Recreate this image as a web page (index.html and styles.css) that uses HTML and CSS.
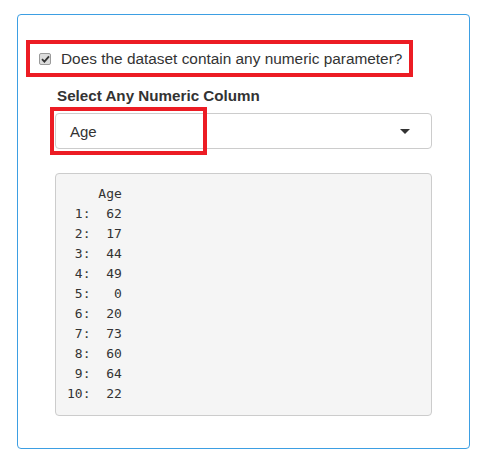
FILE: index.html
```html
<!DOCTYPE html>
<html>
<head>
<meta charset="utf-8">
<link rel="stylesheet" href="styles.css">
</head>
<body>
<div class="panel">
  <label class="check-row">
    <span class="checkbox"><svg width="9" height="8" viewBox="0 0 9 8"><path d="M1 4.2 L3.4 6.6 L8 1.4" fill="none" stroke="#333" stroke-width="1.8"/></svg></span>
    <span class="check-text">Does the dataset contain any numeric parameter?</span>
  </label>
  <div class="field">
    <div class="field-label">Select Any Numeric Column</div>
    <div class="select-wrap">
      <div class="select">
        <span>Age</span>
        <span class="caret"></span>
      </div>
      <div class="highlight"></div>
    </div>
    <pre class="output">    Age
 1:  62
 2:  17
 3:  44
 4:  49
 5:   0
 6:  20
 7:  73
 8:  60
 9:  64
10:  22</pre>
  </div>
</div>
</body>
</html>
```
FILE: styles.css
```css
html, body {
  margin: 0;
  padding: 0;
  background: #fff;
}
body {
  font-family: "Liberation Sans", Arial, sans-serif;
  color: #333;
}
.panel {
  box-sizing: border-box;
  width: 453px;
  height: 435px;
  margin: 14px 0 0 17px;
  border: 1px solid #3d9fe3;
  border-radius: 4px;
  padding: 25px 0 0 8px;
}
.check-row {
  box-sizing: border-box;
  display: flex;
  align-items: center;
  width: 387px;
  height: 37px;
  border: 4px solid #ec1c24;
  padding: 0 0 0 9px;
}
.checkbox {
  box-sizing: border-box;
  width: 12px;
  height: 12px;
  border: 1px solid #9a9a9a;
  border-radius: 2px;
  background: #dcdcdc;
  display: flex;
  align-items: center;
  justify-content: center;
  margin-right: 10px;
}
.checkbox svg { display: block; }
.check-text {
  font-size: 15.4px;
  color: #333;
}
.field {
  margin: 8px 0 0 29px;
  width: 377px;
}
.field-label {
  font-weight: bold;
  font-size: 15.2px;
  line-height: 21px;
  color: #333;
  padding-left: 2px;
}
.select-wrap {
  position: relative;
  margin-top: 7px;
}
.select {
  box-sizing: border-box;
  height: 36px;
  border: 1px solid #ccc;
  border-radius: 4px;
  display: flex;
  align-items: center;
  justify-content: space-between;
  padding: 0 21px 0 14px;
  font-size: 15px;
  color: #333;
}
.caret {
  width: 0;
  height: 0;
  border-left: 5px solid transparent;
  border-right: 5px solid transparent;
  border-top: 5px solid #333;
}
.highlight {
  position: absolute;
  left: -5px;
  top: -6px;
  width: 157px;
  height: 48px;
  box-sizing: border-box;
  border: 4px solid #ec1c24;
}
.output {
  box-sizing: border-box;
  margin: 24px 0 0 0;
  background: #f5f5f5;
  border: 1px solid #ccc;
  border-radius: 4px;
  padding: 10px 11px 11px;
  font-family: "DejaVu Sans Mono", monospace;
  font-size: 13px;
  line-height: 20px;
  color: #333;
}
```
